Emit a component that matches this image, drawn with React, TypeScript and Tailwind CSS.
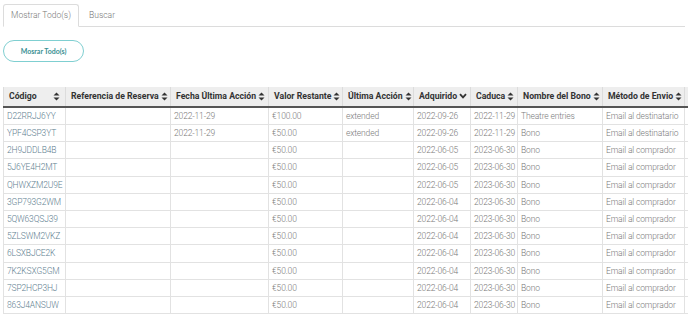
import React from "react";

const cols = [
  { name: "Código", w: 62, icon: "sort" },
  { name: "Referencia de Reserva", w: 105, icon: "sort" },
  { name: "Fecha Última Acción", w: 98, icon: "sort" },
  { name: "Valor Restante", w: 74, icon: "sort" },
  { name: "Última Acción", w: 71, icon: "sort" },
  { name: "Adquirido", w: 57, icon: "down" },
  { name: "Caduca", w: 47, icon: "sort" },
  { name: "Nombre del Bono", w: 85, icon: "sort" },
  { name: "Método de Envio", w: 82, icon: "sort" },
  { name: "", w: 40, icon: "" },
];

const rows: string[][] = [
  ["D22RRJJ6YY", "", "2022-11-29", "€100.00", "extended", "2022-09-26", "2022-11-29", "Theatre entries", "Email al destinatario", ""],
  ["YPF4CSP3YT", "", "2022-11-29", "€50.00", "extended", "2022-09-26", "2022-11-29", "Bono", "Email al destinatario", ""],
  ["2H9JDDLB4B", "", "", "€50.00", "", "2022-06-05", "2023-06-30", "Bono", "Email al comprador", ""],
  ["5J6YE4H2MT", "", "", "€50.00", "", "2022-06-05", "2023-06-30", "Bono", "Email al comprador", ""],
  ["QHWXZM2U9E", "", "", "€50.00", "", "2022-06-05", "2023-06-30", "Bono", "Email al comprador", ""],
  ["3GP793G2WM", "", "", "€50.00", "", "2022-06-04", "2023-06-30", "Bono", "Email al comprador", ""],
  ["5QW63QSJ39", "", "", "€50.00", "", "2022-06-04", "2023-06-30", "Bono", "Email al comprador", ""],
  ["5ZLSWM2VKZ", "", "", "€50.00", "", "2022-06-04", "2023-06-30", "Bono", "Email al comprador", ""],
  ["6LSXBJCE2K", "", "", "€50.00", "", "2022-06-04", "2023-06-30", "Bono", "Email al comprador", ""],
  ["7K2KSXG5GM", "", "", "€50.00", "", "2022-06-04", "2023-06-30", "Bono", "Email al comprador", ""],
  ["7SP2HCP3HJ", "", "", "€50.00", "", "2022-06-04", "2023-06-30", "Bono", "Email al comprador", ""],
  ["863J4ANSUW", "", "", "€50.00", "", "2022-06-04", "2023-06-30", "Bono", "Email al comprador", ""],
];

function SortIcon() {
  return (
    <svg width="7" height="9" viewBox="0 0 7 9" className="shrink-0">
      <path d="M3.5 0.5 L6.5 3.6 L0.5 3.6 Z" fill="#333" />
      <path d="M3.5 8.5 L6.5 5.4 L0.5 5.4 Z" fill="#333" />
    </svg>
  );
}

function DownIcon() {
  return (
    <svg width="8" height="6" viewBox="0 0 8 6" className="shrink-0">
      <path d="M1 1.2 L4 4.4 L7 1.2" fill="none" stroke="#333" strokeWidth="1.8" />
    </svg>
  );
}

export default function App() {
  return (
    <div className="w-[688px] h-[314px] overflow-hidden bg-white" style={{ fontFamily: "Roboto, sans-serif" }}>
      <div className="pt-[4px] px-[3px]">
        <div className="flex border-b border-[#dcdcdc] h-[23px]">
          <div className="w-[76px] h-[23px] border border-[#dcdcdc] border-b-white bg-white rounded-t-[3px] text-[8.5px] font-light text-[#777] flex items-center justify-center -mb-px">
            Mostrar Todo(s)
          </div>
          <div className="w-[46px] h-[22px] text-[8.5px] font-light text-[#777] flex items-center justify-center">Buscar</div>
        </div>
        <div className="mt-[13px] w-[81px] h-[22px] rounded-full border border-[#7fcfd1] flex items-center justify-center text-[7px] font-bold text-[#3a8f93]" style={{ fontFamily: "Lato, sans-serif" }}>
          Mosrar Todo(s)
        </div>
        <div className="mt-[25px]">
          <table className="border-collapse table-fixed" style={{ width: cols.reduce((a, c) => a + c.w, 0) }}>
            <colgroup>
              {cols.map((c, i) => (
                <col key={i} style={{ width: c.w }} />
              ))}
            </colgroup>
            <thead>
              <tr className="bg-[#eeeeee] h-[20px] border-b-2 border-[#555]">
                {cols.map((c, i) => (
                  <th key={i} className="border-x border-[#dcdcdc] px-[5px] p-0 text-left">
                    <div className="flex items-center justify-between gap-[2px] text-[8.7px] font-bold text-[#333] whitespace-nowrap">
                      <span>{c.name}</span>
                      {c.icon === "sort" && <SortIcon />}
                      {c.icon === "down" && <DownIcon />}
                    </div>
                  </th>
                ))}
              </tr>
            </thead>
            <tbody>
              {rows.map((r, ri) => (
                <tr key={ri} className="h-[17.2px] border-b border-[#e2e2e2]">
                  {r.map((cell, ci) => (
                    <td
                      key={ci}
                      className={
                        ci === 0
                          ? "border-x border-[#e2e2e2] px-[3px] py-0 text-[8.5px] font-light tracking-[-0.15px] text-[#5f8191] whitespace-nowrap overflow-hidden leading-[16px]"
                          : "border-x border-[#e2e2e2] px-[3px] py-0 text-[8.5px] font-light tracking-[-0.15px] text-[#7a7a7a] whitespace-nowrap overflow-hidden leading-[16px]"
                      }
                    >
                      {cell}
                    </td>
                  ))}
                </tr>
              ))}
            </tbody>
          </table>
        </div>
      </div>
    </div>
  );
}
